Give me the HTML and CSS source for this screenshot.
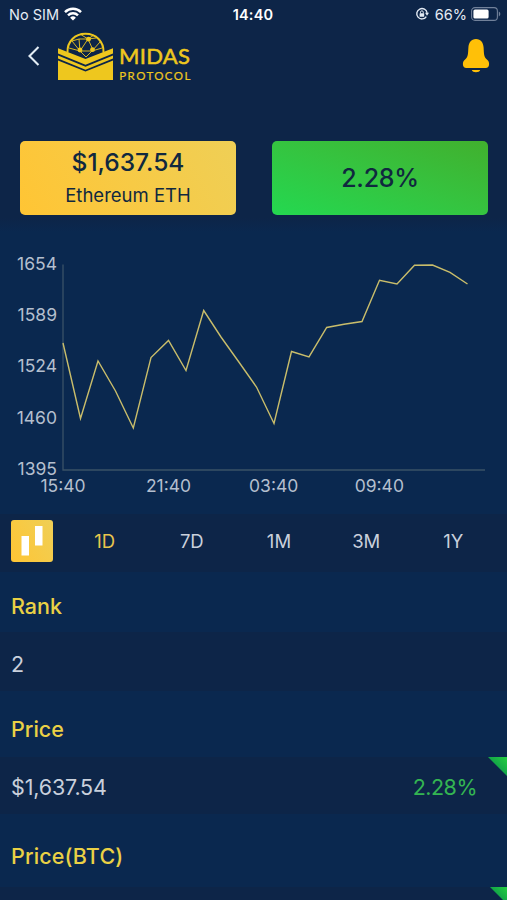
FILE: index.html
```
<!DOCTYPE html>
<html lang="en">

<head>
    <meta charset="UTF-8">
    <meta name="viewport" content="width=device-width, initial-scale=1.0">
    <title>Midas Protocol</title>
    <link rel="stylesheet" href="styles.css">
</head>

<body>
    <div class="top">
        <div class="status">
            <div class="status-left">
                <span class="carrier">No SIM</span>
                <svg width="18" height="14" viewBox="0 0 18 14">
                    <g fill="none" stroke="#fff" stroke-width="2.5">
                        <path d="M1 5.1a11.4 11.4 0 0 1 16 0" />
                        <path d="M4 8.3a7.2 7.2 0 0 1 10 0" />
                    </g>
                    <path d="M9 13.6L6.1 10.7a4.1 4.1 0 0 1 5.8 0z" fill="#fff" />
                </svg>
            </div>
            <div class="clock">14:40</div>
            <div class="status-right">
                <svg width="14" height="14" viewBox="0 0 14 14">
                    <path d="M11.3 9.6a5.2 5.2 0 1 1 .8-3.7" fill="none" stroke="#e4ebf4" stroke-width="1.4" />
                    <path d="M10 5.8h4L12 8.8z" fill="#e4ebf4" />
                    <rect x="4.6" y="6.3" width="4.6" height="3.5" rx=".5" fill="#e4ebf4" />
                    <path d="M5.5 6.4V5.2a1.4 1.4 0 0 1 2.8 0v1.2" fill="none" stroke="#e4ebf4" />
                </svg>
                <span class="percent">66%</span>
                <svg width="30" height="14" viewBox="0 0 30 14">
                    <rect x=".6" y=".6" width="25.8" height="12.8" rx="3.4" fill="none" stroke="#71819a" stroke-width="1.1" />
                    <rect x="2.4" y="2.4" width="15.2" height="9.2" rx="1.6" fill="#fff" />
                    <path d="M27.8 4.6c2 .8 2 4 0 4.8z" fill="#71819a" />
                </svg>
            </div>
        </div>
        <div class="header">
            <svg class="back" width="14" height="22" viewBox="0 0 14 22">
                <path d="M11.5 2L2.5 11l9 9" fill="none" stroke="#e3edf5" stroke-width="2.1" />
            </svg>
            <svg class="logo" width="136" height="52" viewBox="0 0 136 52">
                <g fill="none" stroke="#eec71e">
                    <path d="M9.5 20.5C9 9.500 17 1.800 27.500 1.800S46 9.500 45.500 20.500" stroke-width="2" />
                    <path d="M14 9l7-2 9 0 8-1M21 7l1 12M30 7l-8 12M30 7l5 11M22 19l-11-3M22 19l12 0M34 19l10-3M42 10l-8 9M22 19l6 6M34 19l-6 6M30 7l-8-5M30 7l6-4M14 9l8 10" stroke-width=".9" />
                </g>
                <g fill="#eec71e">
                    <circle cx="30.5" cy="7.2" r="2.4" />
                    <circle cx="22" cy="18" r="2.4" />
                    <circle cx="34.5" cy="17.7" r="2.4" />
                    <path d="M0 16.2L27.5 27 55 16.2v5.3L27.5 32.8 0 21.5z" />
                    <path d="M0 23.4l27.5 11.4L55 23.4v3L27.5 37.8 0 26.4z" />
                    <path d="M0 28.5l27.5 11 27.5-11V48H0z" />
                    <text class="logo-name" x="61" y="32.2" textLength="71">MIDAS</text>
                    <text class="logo-sub" x="61.3" y="48" textLength="71">PROTOCOL</text>
                </g>
            </svg>
            <svg class="bell" width="28" height="34" viewBox="0 0 28 34">
                <path d="M14 0C9 0 6.7 3.7 6.4 8.5 6 15 6.2 18 3.1 20.6 1.5 22 .9 23.3.9 25.2.9 27.6 2.2 29 4.3 29h19.4c2.1 0 3.4-1.4 3.4-3.8 0-1.9-.6-3.2-2.2-4.6C21.8 18 22 15 21.6 8.5 21.3 3.7 19 0 14 0z" fill="#ffc008" />
                <path d="M9.8 31h8.4c-.7 3-7.7 3-8.4 0z" fill="#ffc008" />
            </svg>
        </div>
        <div class="cards">
            <div class="card card-price">
                <div class="amount">$1,637.54</div>
                <div class="coin">Ethereum ETH</div>
            </div>
            <div class="card card-change">2.28%</div>
        </div>
    </div>

    <svg class="chart" width="507" height="282" viewBox="0 232 507 282">
        <path class="axis" d="M63 264.5V470H485" />
        <polyline class="line" points="63,343 80.5,418.5 98,361 115.5,391 133.3,428 151,357.5 168.5,340.5 186,370.5 203.7,310.5 221,337 238.5,361.5 256.5,387 274,423.5 291.5,351.5 309,356.8 326.7,327.5 344,324.3 362,321.5 379.5,280.3 397,284 414.5,265.3 432.5,265 450,272.3 467.5,284" />
        <g class="y-labels">
            <text x="57" y="269.8">1654</text>
            <text x="57" y="321">1589</text>
            <text x="57" y="372.4">1524</text>
            <text x="57" y="423.8">1460</text>
            <text x="57" y="475">1395</text>
        </g>
        <g class="x-labels">
            <text x="63" y="492">15:40</text>
            <text x="168.5" y="492">21:40</text>
            <text x="273.7" y="492">03:40</text>
            <text x="379.3" y="492">09:40</text>
        </g>
    </svg>

    <div class="tabs">
        <div class="candle">
            <svg width="42" height="42" viewBox="0 0 42 42">
                <path d="M10.5 16H18v19.5h-7.5zM24 6h7.5v19.5H24z" fill="#fff" />
            </svg>
        </div>
        <div class="ranges">
            <span class="active">1D</span>
            <span>7D</span>
            <span>1M</span>
            <span>3M</span>
            <span>1Y</span>
        </div>
    </div>

    <div class="label label-rank">Rank</div>
    <div class="value value-rank">2</div>
    <div class="label label-price">Price</div>
    <div class="value corner">
        <span class="price">$1,637.54</span>
        <span class="up">2.28%</span>
    </div>
    <div class="label label-btc">Price(BTC)</div>
    <div class="value corner corner-btc"></div>
</body>

</html>
```
FILE: styles.css
```
body {
    margin: 0;
    width: 507px;
    height: 900px;
    overflow: hidden;
    background: #0a284f;
    font-family: Inter, "Liberation Sans", sans-serif;
    color: #c9d0dc;
}

svg {
    display: block;
}

.top {
    height: 232px;
    background: linear-gradient(#0d2548 94%, #0a284f);
}

/* phone status bar */
.status {
    display: grid;
    grid-template-columns: 1fr auto 1fr;
    align-items: center;
    height: 28px;
    padding: 0 6px 0 9px;
    font-size: 14.5px;
    color: #e4ebf4;
}

.status-left,
.status-right {
    display: flex;
    align-items: center;
    gap: 5px;
}

.status-right {
    justify-content: flex-end;
}

.percent {
    margin-right: -1px;
    margin-left: 1px;
}

.clock {
    font-weight: 600;
    letter-spacing: .2px;
    margin-left: -4px;
    color: #fff;
}

.header {
    display: flex;
    align-items: flex-start;
    height: 113px;
    padding: 0 17px 0 27px;
    box-sizing: border-box;
}

.back {
    margin-top: 17px;
}

.logo {
    margin: 4px 0 0 17px;
}

.logo-name,
.logo-sub {
    font-family: Lato, sans-serif;
    stroke: #eec71e;
}

.logo-name {
    font-size: 22px;
    stroke-width: .5;
}

.logo-sub {
    font-size: 11.5px;
    stroke-width: .2;
}

.bell {
    margin: 11px 0 0 auto;
}

.cards {
    display: flex;
    justify-content: space-between;
    padding: 0 19px 0 20px;
}

.card {
    display: flex;
    flex-direction: column;
    align-items: center;
    width: 216px;
    height: 74px;
    border-radius: 5px;
    color: #10283f;
}

.card-price {
    background: linear-gradient(60deg, #ffc534, #efcf56);
}

.card-change {
    justify-content: center;
    background: linear-gradient(to top right, #24d850, #35c440 50%, #41b02e);
    font-size: 25px;
    font-weight: 500;
    letter-spacing: -.3px;
}

.amount {
    margin-top: 5px;
    line-height: 32px;
    font-size: 24.5px;
    font-weight: 500;
}

.coin {
    line-height: 34px;
    font-size: 18.5px;
}

.axis {
    fill: none;
    stroke: #3a5267;
    stroke-width: 1.3;
}

.line {
    fill: none;
    stroke: #c9bd6b;
    stroke-width: 1.4;
}

.y-labels,
.x-labels {
    fill: #b4bfce;
    font-size: 17.5px;
}

.y-labels {
    text-anchor: end;
}

.x-labels {
    text-anchor: middle;
}

.tabs {
    display: flex;
    align-items: center;
    height: 58px;
    padding: 0 10px 5px 11px;
    box-sizing: border-box;
    background: #0d2548;
}

.candle {
    width: 42px;
    height: 42px;
    border-radius: 3px;
    background: linear-gradient(60deg, #ffc534, #efcf56);
}

.ranges {
    display: grid;
    grid-template-columns: repeat(5, 1fr);
    width: 436px;
    margin-left: 8px;
    text-align: center;
    font-size: 18.5px;
}

.active {
    color: #e8c64d;
}

.label,
.value {
    display: flex;
    align-items: center;
    padding-left: 11px;
    box-sizing: border-box;
    font-size: 21.5px;
}

.label {
    color: #ead145;
    font-weight: 500;
}

.label-rank {
    height: 60px;
    padding-top: 7px;
}

.label-price {
    height: 66px;
    padding-top: 9px;
}

.label-btc {
    height: 73px;
    padding-top: 10px;
    letter-spacing: .15px;
}

.value {
    justify-content: space-between;
    height: 57px;
    padding-right: 30px;
    padding-top: 3px;
    background: #0d2548;
}

.value-rank {
    height: 59px;
    padding-top: 4px;
}

/* green triangle for a rising value */
.corner {
    background: linear-gradient(45deg, transparent 48%, #14a848 52%, #24cf40) top right / 19px 19px no-repeat, #0d2548;
}

.corner-btc {
    background-size: 17px 17px, auto;
}

.price {
    letter-spacing: -.15px;
}

.up {
    color: #34b552;
    letter-spacing: -.5px;
}
```
